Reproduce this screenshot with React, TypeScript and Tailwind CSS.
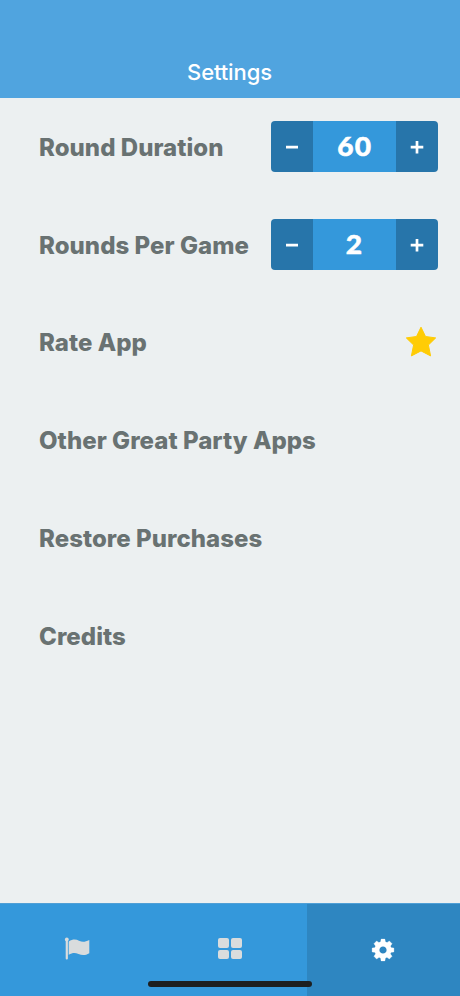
import type { ReactNode } from "react";

const links = ["Rate App", "Other Great Party Apps", "Restore Purchases", "Credits"];

function Stepper({ value }: { value: string }) {
  return (
    <div className="flex h-[51px] w-[166.5px] overflow-hidden rounded-[4px] text-white">
      <button aria-label="Decrease" className="flex w-[41.5px] items-center justify-center bg-[#2775aa]">
        <svg width="14" height="14" viewBox="0 0 14 14"><path d="M1 7.2H13" stroke="white" strokeWidth="2.7" /></svg>
      </button>
      <div className="flex flex-1 items-center justify-center bg-[#3498db] pb-[1px] font-[Lato,sans-serif] text-[27px] font-black tracking-[1px] [-webkit-text-stroke:0.5px_white]">
        <span className="-mr-[1px] scale-x-[1.04]">{value}</span>
      </div>
      <button aria-label="Increase" className="flex w-[41.5px] items-center justify-center bg-[#2775aa]">
        <svg width="14" height="14" viewBox="0 0 14 14"><path d="M0.7 7.2H13.3M7 1V13.5" stroke="white" strokeWidth="2.7" /></svg>
      </button>
    </div>
  );
}

function Row({ label, children }: { label: string; children?: ReactNode }) {
  return (
    <div className="flex h-[97.8px] items-center justify-between pr-[22.5px] pl-[39px]">
      <span className="whitespace-nowrap pt-[2px] text-[24px] font-extrabold tracking-[0.04px] text-[#697272]">{label}</span>
      {children}
    </div>
  );
}

function Star() {
  return (
    <svg className="mr-[0.5px]" width="32" height="32" viewBox="0 0 32 32">
      <path d="M16 1.2L20.5 10.5L30.7 11.9L23.4 19L25.6 29.9L16 24.9L6.4 29.9L8.6 19L1.3 11.9L11.5 10.5Z" fill="#ffcc05" stroke="#ffcc05" strokeWidth="1" strokeLinejoin="round" />
    </svg>
  );
}

function FlagIcon() {
  return (
    <svg width="26" height="24" viewBox="0 0 26 24" fill="#d9dcdd">
      <circle cx="2.8" cy="2.4" r="1.9" />
      <rect x="1.7" y="2" width="2.2" height="20.5" rx="1" />
      <path d="M4.7 4.6C9 1.8 12 2.3 15 3.8C18.5 5.5 21 5.1 25.3 3.1V16.2C21.5 18.5 18 18.5 14.5 17C11 15.5 8.5 15.6 4.7 17.8Z" />
    </svg>
  );
}

function GridIcon() {
  return (
    <div className="grid h-[21px] w-6 grid-cols-2 gap-[2px]">
      <i className="rounded-[2px] bg-[#d9dcdd]" />
      <i className="rounded-[2px] bg-[#d9dcdd]" />
      <i className="rounded-[2px] bg-[#d9dcdd]" />
      <i className="rounded-[2px] bg-[#d9dcdd]" />
    </div>
  );
}

const teeth = [0, 45, 90, 135, 180, 225, 270, 315];

function GearIcon() {
  return (
    <svg width="24" height="24" viewBox="-12 -12 24 24">
      <circle r="6" fill="none" stroke="white" strokeWidth="4.8" />
      {teeth.map((a) => (
        <path key={a} d="M-2.6 -7L-1.9 -10.9H1.9L2.6 -7Z" fill="white" stroke="white" strokeWidth=".3" strokeLinejoin="round" transform={`rotate(${a})`} />
      ))}
    </svg>
  );
}

export default function App() {
  return (
    <div className="relative flex h-[996px] w-[460px] flex-col bg-[#ecf0f1] font-[Inter,sans-serif]">
      <header className="flex h-[98px] items-end justify-center bg-[#50a4df] pr-[1px] pb-[9px] text-[22px] font-medium tracking-[-0.1px] text-white">Settings</header>
      <main className="flex-1">
        <Row label="Round Duration"><Stepper value="60" /></Row>
        <Row label="Rounds Per Game"><Stepper value="2" /></Row>
        {links.map((label) => (
          <Row key={label} label={label}>{label === "Rate App" && <Star />}</Row>
        ))}
      </main>
      <nav className="grid h-[93px] grid-cols-3 border-t border-[#4f9fd6] bg-[#3498db]">
        <button aria-label="Games" className="flex items-center justify-center pb-[2px]"><FlagIcon /></button>
        <button aria-label="Categories" className="flex items-center justify-center pb-[3px]"><GridIcon /></button>
        <button aria-label="Options" className="flex items-center justify-center bg-[#2e86c1] pb-[1px]"><GearIcon /></button>
      </nav>
      <div className="absolute bottom-[9px] left-[148px] h-[6px] w-[164px] rounded-full bg-[#1d1f20]" />
    </div>
  );
}
